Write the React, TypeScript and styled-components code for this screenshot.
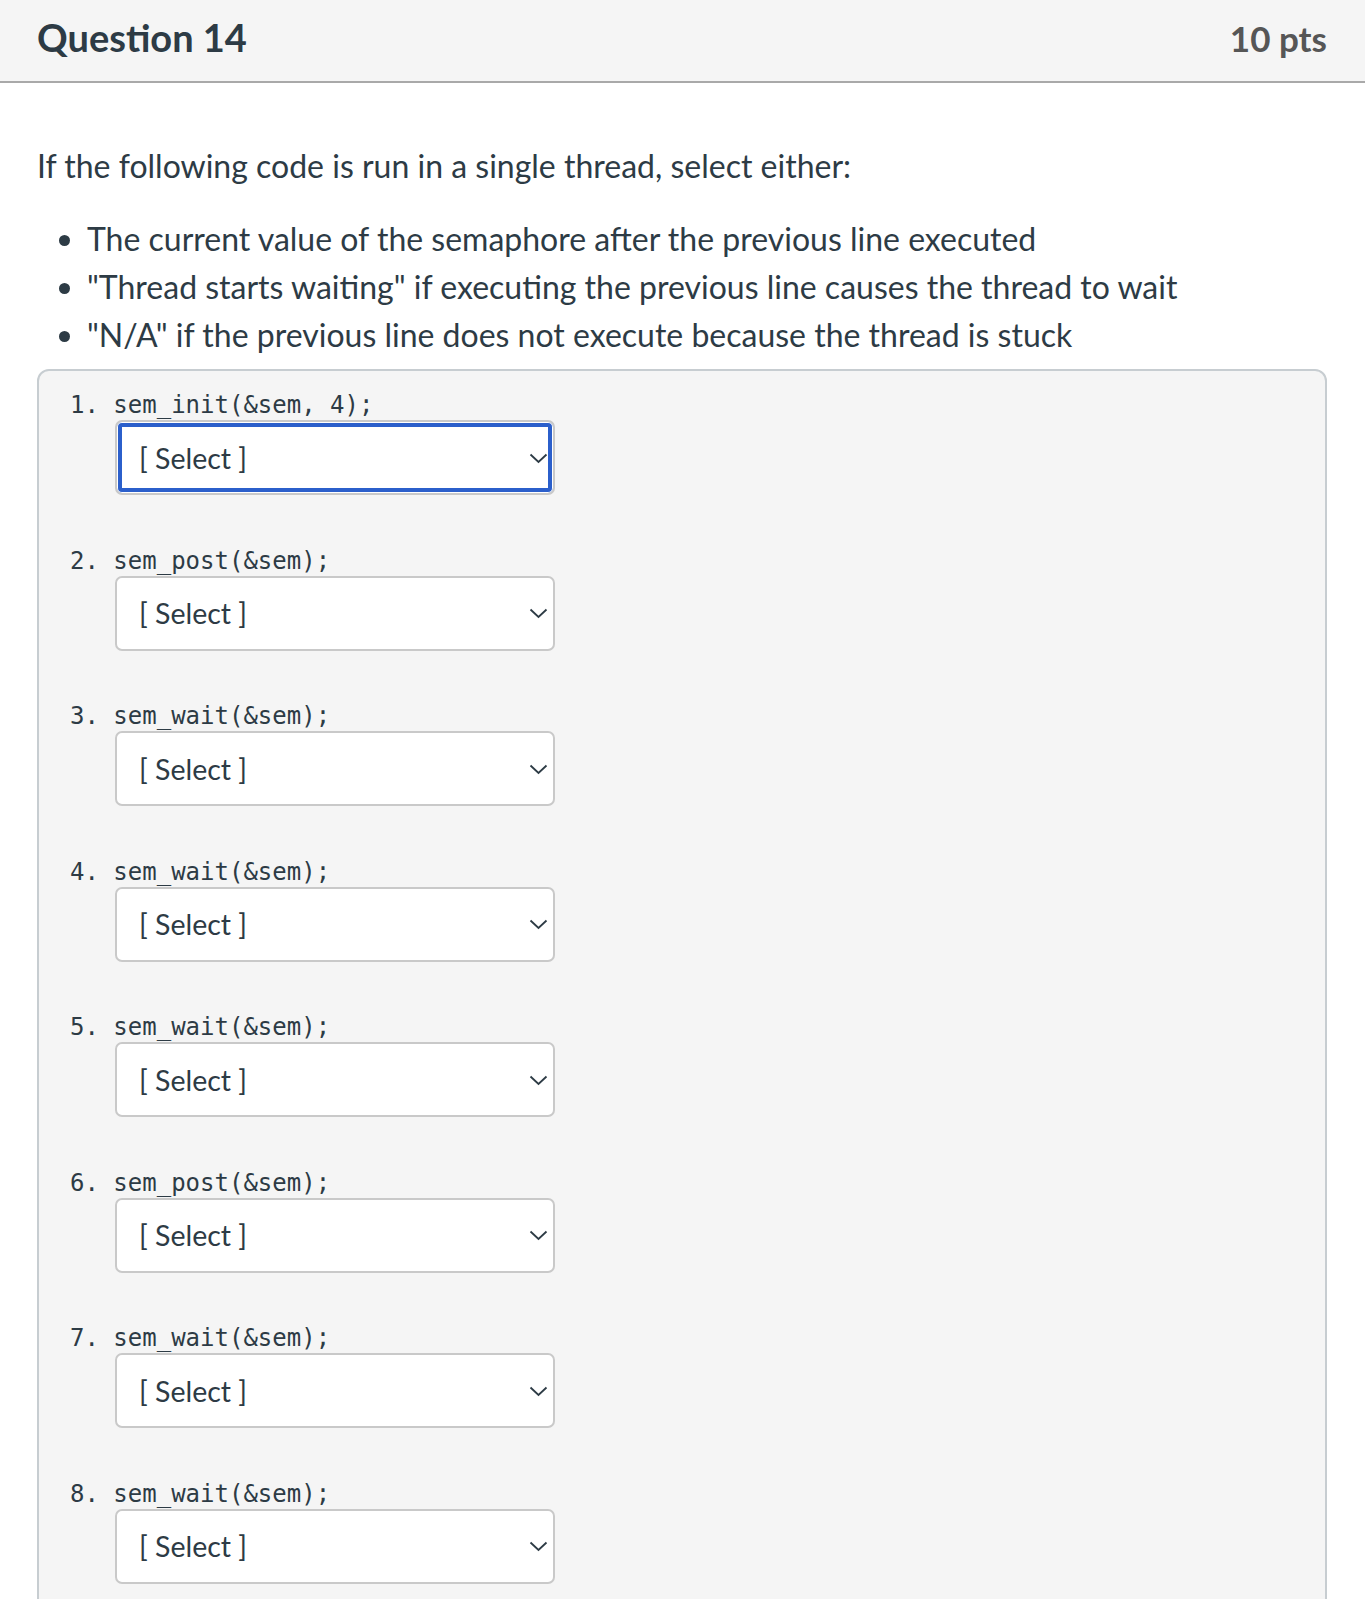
import React from "react";
import styled, { createGlobalStyle } from "styled-components";

const GlobalStyle = createGlobalStyle`
  body {
    margin: 0;
    background: #ffffff;
    font-family: Lato, "Open Sans", sans-serif;
    color: #2d3b45;
  }
`;

const PageContainer = styled.div`
  width: 100%;
  min-height: 1599px;
  overflow: hidden;
`;

const Header = styled.div`
  height: 81px;
  box-sizing: content-box;
  padding: 0 38px 0 37px;
  display: flex;
  align-items: center;
  justify-content: space-between;
  background: #f5f5f5;
  border-bottom: 2px solid #a9a9a9;
`;

const QuestionTitle = styled.div`
  font-size: 38px;
  font-weight: 700;
  color: #2d3b45;
  margin-top: -7px;
`;

const Points = styled.div`
  font-size: 35px;
  font-weight: 700;
  color: #565656;
  margin-top: -6px;
`;

const Body = styled.div`
  padding: 59px 38px 0 37px;
`;

const Intro = styled.p`
  margin: 0;
  font-size: 32px;
  line-height: 48px;
`;

const BulletList = styled.ul`
  margin: 25px 0 10px;
  padding-left: 50px;
  font-size: 32px;
  line-height: 48px;
`;

const AnswerBox = styled.div`
  border: 2px solid #c7cdd1;
  border-radius: 12px;
  background: #f5f5f5;
  padding: 19px 31px 60px;
  display: flex;
  flex-direction: column;
  gap: 50.5px;
`;

const Item = styled.div`
  display: flex;
  flex-direction: column;
`;

const CodeLine = styled.div`
  font-family: "DejaVu Sans Mono", "Liberation Mono", monospace;
  font-size: 24px;
  line-height: 30px;
  color: #2d3b45;
  white-space: pre;
`;

const SelectWrap = styled.div`
  position: relative;
  margin-left: 45px;
  width: 440px;
  height: 75px;
`;

const Select = styled.select<{ $focused?: boolean }>`
  appearance: none;
  -webkit-appearance: none;
  width: 100%;
  height: 100%;
  box-sizing: border-box;
  border: 2px solid #c9c9c9;
  border-radius: 7px;
  background: #ffffff;
  padding: 0 40px 0 22px;
  font-family: Lato, "Open Sans", sans-serif;
  font-size: 28.5px;
  color: #2d3b45;
  outline: none;
  box-shadow: ${(p) =>
    p.$focused ? "inset 0 0 0 1px #ffffff, inset 0 0 0 5px #2b5fcb" : "none"};
`;

const Chevron = styled.svg`
  position: absolute;
  right: 7px;
  top: 50%;
  margin-top: -5px;
  pointer-events: none;
`;

const lines = [
  "sem_init(&sem, 4);",
  "sem_post(&sem);",
  "sem_wait(&sem);",
  "sem_wait(&sem);",
  "sem_wait(&sem);",
  "sem_post(&sem);",
  "sem_wait(&sem);",
  "sem_wait(&sem);",
];

function Dropdown({ focused }: { focused?: boolean }) {
  return (
    <SelectWrap>
      <Select $focused={focused} defaultValue="">
        <option value="">[ Select ]</option>
        <option value="0">0</option>
        <option value="1">1</option>
        <option value="2">2</option>
        <option value="3">3</option>
        <option value="4">4</option>
        <option value="5">5</option>
        <option value="wait">Thread starts waiting</option>
        <option value="na">N/A</option>
      </Select>
      <Chevron width="19" height="11" viewBox="0 0 19 11">
        <path d="M1.5 1.5 L9.5 9 L17.5 1.5" fill="none" stroke="#2d3b45" strokeWidth="1.8" />
      </Chevron>
    </SelectWrap>
  );
}

export default function App() {
  return (
    <PageContainer>
      <GlobalStyle />
      <Header>
        <QuestionTitle>Question 14</QuestionTitle>
        <Points>10 pts</Points>
      </Header>
      <Body>
        <Intro>If the following code is run in a single thread, select either:</Intro>
        <BulletList>
          <li>The current value of the semaphore after the previous line executed</li>
          <li>"Thread starts waiting" if executing the previous line causes the thread to wait</li>
          <li>"N/A" if the previous line does not execute because the thread is stuck</li>
        </BulletList>
        <AnswerBox>
          {lines.map((line, i) => (
            <Item key={i}>
              <CodeLine>{`${i + 1}. ${line}`}</CodeLine>
              <Dropdown focused={i === 0} />
            </Item>
          ))}
        </AnswerBox>
      </Body>
    </PageContainer>
  );
}
